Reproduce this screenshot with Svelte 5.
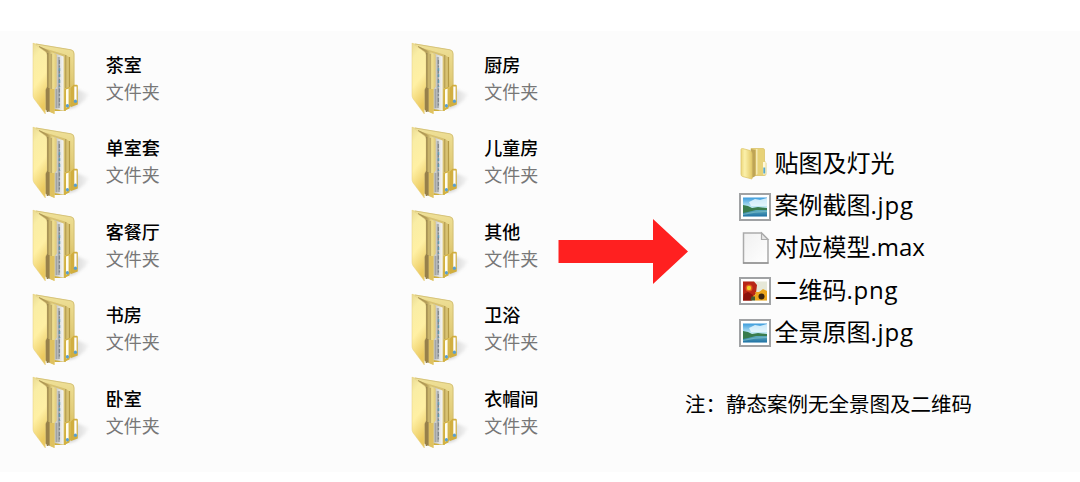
<script>
  const columns = [
    ['茶室', '单室套', '客餐厅', '书房', '卧室'],
    ['厨房', '儿童房', '其他', '卫浴', '衣帽间'],
  ];
  const files = [
    { kind: 'folder', base: '贴图及灯光', ext: '' },
    { kind: 'photo', base: '案例截图', ext: '.jpg' },
    { kind: 'blank', base: '对应模型', ext: '.max' },
    { kind: 'flower', base: '二维码', ext: '.png' },
    { kind: 'photo', base: '全景原图', ext: '.jpg' },
  ];
</script>

<svg class="defs" width="0" height="0" aria-hidden="true">
  <defs>
    <linearGradient id="front" x1="0" y1="0" x2=".25" y2="1">
      <stop offset="0" stop-color="#e9da93" />
      <stop offset=".22" stop-color="#f9eda5" />
      <stop offset=".6" stop-color="#fff0a4" />
      <stop offset="1" stop-color="#ebc95f" />
    </linearGradient>
    <linearGradient id="back" x1="0" y1="0" x2="0" y2="1">
      <stop offset="0" stop-color="#f0e29a" />
      <stop offset=".5" stop-color="#e2cd7a" />
      <stop offset="1" stop-color="#cfae3c" />
    </linearGradient>
    <linearGradient id="mid" x1="0" y1="0" x2="1" y2="0">
      <stop offset="0" stop-color="#a48e4f" />
      <stop offset=".5" stop-color="#b7a05a" />
      <stop offset=".8" stop-color="#efdf90" />
      <stop offset="1" stop-color="#dfc878" />
    </linearGradient>
    <linearGradient id="paper" x1="0" y1="0" x2="1" y2="0">
      <stop offset="0" stop-color="#c0c0bd" />
      <stop offset=".6" stop-color="#dedfdf" />
      <stop offset="1" stop-color="#f7f7f5" />
    </linearGradient>
    <linearGradient id="sheet" x1="0" y1="0" x2="1" y2="1">
      <stop offset="0" stop-color="#f0f0f0" />
      <stop offset="1" stop-color="#ffffff" />
    </linearGradient>
    <linearGradient id="sky" x1="0" y1="0" x2="0" y2="1">
      <stop offset="0" stop-color="#3b9bdc" />
      <stop offset=".5" stop-color="#c3eaf5" />
      <stop offset="1" stop-color="#d9f3f7" />
    </linearGradient>
    <linearGradient id="sea" x1="0" y1="0" x2="0" y2="1">
      <stop offset="0" stop-color="#66b4c0" />
      <stop offset="1" stop-color="#1f70a4" />
    </linearGradient>
    <linearGradient id="small" x1="0" y1="0" x2="1" y2="0">
      <stop offset="0" stop-color="#ecd77c" />
      <stop offset=".35" stop-color="#fbf0aa" />
      <stop offset="1" stop-color="#e3c967" />
    </linearGradient>
    <linearGradient id="fall" x1="0" y1="0" x2="1" y2="0">
      <stop offset="0" stop-color="#777" stop-opacity=".4" />
      <stop offset="1" stop-color="#999" stop-opacity=".08" />
    </linearGradient>
    <filter id="shade" x="-40%" y="-40%" width="180%" height="180%" color-interpolation-filters="sRGB"><feGaussianBlur stdDeviation="1.5" /></filter>
    <filter id="soft" color-interpolation-filters="sRGB"><feGaussianBlur stdDeviation=".6" /></filter>
  </defs>
</svg>

{#snippet bigFolder()}
  <svg class="big" viewBox="0 0 64 78" aria-hidden="true">
    <path d="M38 69 46 49 59 54 55 60 46 67z" fill="url(#fall)" filter="url(#shade)" />
    <g filter="url(#soft)">
      <path d="M3 3 41 9.500Q44.300 10.200 44.300 13V64L34 71 20 71z" fill="url(#back)" />
      <path d="M6 4 41 9.800Q44 10.500 44 14V45" fill="none" stroke="#cfbb72" stroke-width=".8" />
      <path d="M10 7 35 14.500 39 17V47L36 49V71H30z" fill="#d8c272" />
      <path d="M35.700 15V48" stroke="#b9a257" stroke-width="1.300" />
      <path d="M39.500 17V47" stroke="#b59a45" stroke-width="1.200" />
      <path d="M24 13 33.600 16.500V70.500L24 69z" fill="url(#paper)" />
      <path d="M28.800 17V68" stroke="#9b9fa0" stroke-width="2.200" opacity=".75" />
      <path d="M29.400 20V66" stroke="#70777b" stroke-width="1.300" stroke-dasharray="4 1.500 2 2" opacity=".7" />
      <path d="M29.500 28V47" stroke="#5b9cb5" stroke-width="1.500" stroke-dasharray="3 3" opacity=".8" />
      <path d="M26.500 49V68" stroke="#a3a4a2" stroke-width="1.800" />
      <path d="M9 6 26.700 14.500V46.500L24.500 49.500V74L14 69z" fill="url(#mid)" />
      <path d="M17.500 13V72" stroke="#94804a" stroke-width="1.600" />
      <path d="M21.200 14V49" stroke="#a59057" stroke-width=".8" />
      <path d="M16 48H19.500V72L16 70z" fill="#97804a" />
      <path d="M20 49H24.500V74L20 72z" fill="#dfc160" />
      <path d="M34.500 49 39.500 46.700V68.500L34 71z" fill="#d2b140" />
      <path d="M36 49.500 38.600 48.500V66.500L36 67.500z" fill="#fffdf0" />
      <path d="M40.500 48 43.500 44.700H46.500Q47.800 44.500 47.800 46V64.500L41 67z" fill="#d1ae40" />
      <path d="M44.300 46.500H46.600V61.500L44.300 62z" fill="#fff" />
      <ellipse cx="37.400" cy="65.800" rx="1.600" ry="1.800" fill="#5a9fce" />
      <ellipse cx="45.400" cy="61.200" rx="1.600" ry="1.800" fill="#5a9fce" />
      <path d="M3 3 15.500 11.700Q17 13 17 15V46.500L15.300 50V74L4 58.700Q3 57 3 55z" fill="url(#front)" stroke="#e4cf80" stroke-width=".5" />
    </g>
  </svg>
{/snippet}

{#snippet fileIcon(kind)}
  <svg class="icon" viewBox="0 0 34 34" aria-hidden="true">
    <g filter="url(#soft)">
      {#if kind === 'folder'}
        <path d="M13 2.500H25Q26.500 2.500 26.500 4V15L28 17V28Q28 29.500 26 29.500H13z" fill="#e7d278" stroke="#dbc46c" stroke-width=".8" />
        <path d="M13 3 17.500 4V30L14 32z" fill="#bfa455" />
        <path d="M18 3H19.500V28L18 29z" fill="#f5e9b4" />
        <path d="M3 3.500Q3 2.500 4.500 2.500L12 4.500Q14 5.500 14 8V33L4.500 30.500Q3 30 3 28z" fill="url(#small)" stroke="#ddc66c" stroke-width=".8" />
        <path d="M25 16H27.700V28.500H25z" fill="#fff8d8" />
        <path d="M25.300 21.500H27.200V27.500H25.300z" fill="#58a8ca" />
      {:else if kind === 'blank'}
        <path d="M5.500 3H23.500L30 9.500V33H5.500z" fill="url(#sheet)" stroke="#aaa" stroke-width="1.500" />
        <path d="M23.500 3V9.500H30z" fill="#e6e6e6" stroke="#aaa" stroke-width="1.200" />
        <path d="M5 33H30.500" stroke="#808080" />
      {:else}
        <rect x="2" y="6" width="30" height="26" fill="#fff" stroke="#a0a2a4" stroke-width="2" />
        {#if kind === 'photo'}
          <rect x="5" y="9.500" width="24" height="19" fill="url(#sky)" />
          <path d="M11 14 17 11 22 12 29 10V18H13z" fill="#eefaff" opacity=".8" />
          <rect x="5" y="21" width="24" height="7.500" fill="url(#sea)" />
          <path d="M5 17 10 18 14 20 20 19 29 20V22H18L10 24 5 25z" fill="#397c4d" />
          <path d="M5 26Q15 23 29 23V24Q18 24 5 27z" fill="#87c4c9" opacity=".6" />
        {:else}
          <rect x="5" y="9.500" width="24" height="19" fill="#e6e8d8" />
          <path d="M5 9.500H16L19 13 18 21 14 28.500H5z" fill="#b82617" />
          <path d="M6 22 10 20 15 23 13 28.500H5z" fill="#8b130d" />
          <circle cx="11" cy="16" r="3.500" fill="#e05a1d" />
          <circle cx="11" cy="16" r="2.200" fill="#efcf2a" />
          <path d="M17 20 21 20 25 17 29 19V28.500H17L15 24 18 22z" fill="#eba61d" />
          <circle cx="23.500" cy="24.500" r="3" fill="#392511" />
          <path d="M13.500 24.500H17V28.500H12.500z" fill="#455c32" />
        {/if}
      {/if}
    </g>
  </svg>
{/snippet}

<main>
  <section class="folders">
    {#each columns as names}
      <ul class="column">
        {#each names as name}
          <li class="folder">
            {@render bigFolder()}
            <div class="label">
              <span class="name">{name}</span>
              <span class="type">文件夹</span>
            </div>
          </li>
        {/each}
      </ul>
    {/each}
  </section>
  <svg class="arrow" viewBox="0 0 131 68" aria-hidden="true">
    <path d="M.5 22H95V1L130 33.500 95 66V45H.5z" fill="#ff2020" />
  </svg>
  <section class="contents">
    <ul class="files">
      {#each files as file}
        <li>
          {@render fileIcon(file.kind)}
          <span class="filename">{file.base}<span class="ext" class:wide={file.ext !== '.max'}>{file.ext}</span></span>
        </li>
      {/each}
    </ul>
    <p>注：静态案例无全景图及二维码</p>
  </section>
</main>

<style>
  :global(body) {
    margin: 0;
    background: #fff;
  }
  .defs {
    display: block;
  }
  main {
    box-sizing: border-box;
    display: flex;
    width: 1080px;
    height: 441px;
    margin-top: 31px;
    padding-left: 30px;
    overflow: hidden;
    background: #fcfcfc;
    font-family: "Noto Sans CJK SC", sans-serif;
    color: #000;
  }
  ul {
    margin: 0;
    padding: 0;
    list-style: none;
  }
  .folders {
    display: grid;
    grid-template-columns: 378.5px 149.5px;
    flex: none;
    padding-top: 9px;
  }
  .folder {
    display: flex;
    height: 83.5px;
  }
  .big {
    flex: none;
    width: 64px;
    height: 78px;
  }
  .label {
    display: flex;
    flex-direction: column;
    padding: 10.5px 0 0 11.8px;
    font-size: 18px;
    line-height: 27px;
    white-space: nowrap;
  }
  .name {
    font-weight: 500;
  }
  .type {
    color: #777;
  }
  .arrow {
    flex: none;
    width: 131px;
    height: 68px;
    margin-top: 187px;
  }
  .contents {
    flex: none;
    padding-top: 110.5px;
  }
  .files {
    padding-left: 49px;
  }
  .files li {
    display: flex;
    align-items: center;
    height: 42.2px;
  }
  .icon {
    flex: none;
    width: 34px;
    height: 34px;
  }
  .filename {
    padding-left: 2.5px;
    font-size: 24px;
    line-height: 42px;
    white-space: nowrap;
  }
  .ext {
    font-family: "Open Sans", sans-serif;
  }
  .wide {
    letter-spacing: .8px;
  }
  p {
    margin: 36px 0 0 -4px;
    font-size: 20.5px;
    line-height: 30px;
    white-space: nowrap;
  }
</style>
